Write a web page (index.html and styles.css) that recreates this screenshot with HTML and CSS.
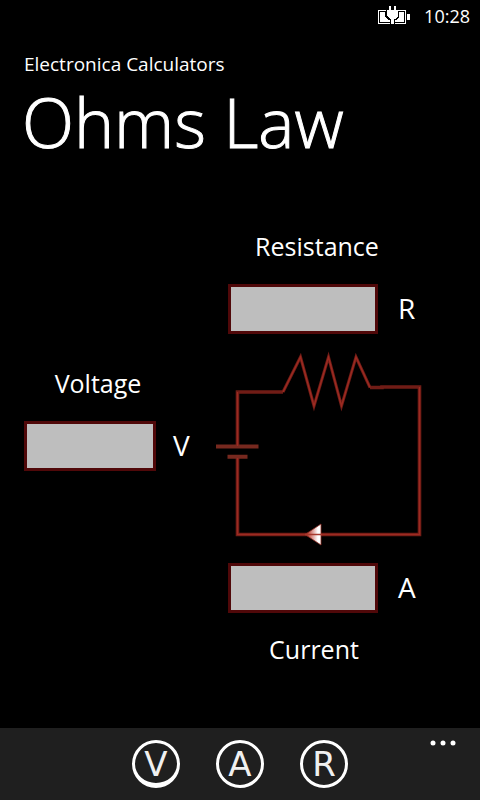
FILE: index.html
```html
<!DOCTYPE html>
<html lang="en">
<head>
<meta charset="utf-8">
<meta name="viewport" content="width=device-width, initial-scale=1">
<title>Ohms Law</title>
<link rel="stylesheet" href="styles.css">
</head>
<body>
<div class="status">
  <svg class="battery" width="32" height="20" viewBox="0 0 32 20" shape-rendering="crispEdges" aria-hidden="true">
    <path d="M0 5H8V6H1V18H12V19H0ZM20 5H28V19H17V18H27V6H20ZM29 9H32V15H29Z" fill="#fff"/>
    <path d="M2 7H7V12L10 15H12V17H2ZM21 7H26V17H17V15H18L21 12Z" fill="#fff"/>
    <path d="M11 1H13V5H16V1H18V5H20V11L17 14H16V19H13V14H12L9 11V5H11Z" fill="#fff"/>
  </svg>
  <time>10:28</time>
</div>
<header class="heading">
  <p class="app-name">Electronica Calculators</p>
  <h1 class="title">Ohms Law</h1>
</header>
<main class="calculator">
  <div class="group resistance">
    <label class="label" for="resistance">Resistance</label>
    <div class="entry"><input class="field" id="resistance" type="text"><span class="unit">R</span></div>
  </div>
  <div class="group voltage">
    <label class="label" for="voltage">Voltage</label>
    <div class="entry"><input class="field" id="voltage" type="text"><span class="unit">V</span></div>
  </div>
  <svg class="circuit" viewBox="216 350 212 200" role="img" aria-label="Circuit with a battery and a resistor">
    <defs>
      <linearGradient id="arrow" x1="0" x2="1"><stop offset=".15" stop-color="#b8382b"/><stop offset=".8" stop-color="#fff"/></linearGradient>
    </defs>
    <g fill="none" stroke="#701c16" stroke-width="3.6">
      <path d="M237.5 446V392H283"/>
      <path d="M370 387.5H382V387H419.5V534.5H237.5V458"/>
      <path d="M283 392L300.5 357L314 406L328.5 357L341.5 406L356 357L370 387.5" stroke-width="3"/>
      <path d="M216 446.5H258.5M227.5 456.7H247.5" stroke="#77291f" stroke-width="4"/>
    </g>
    <path d="M237.5 446V392M419.5 387V534.5H237.5V458M283 392L300.5 357L314 406L328.5 357L341.5 406L356 357L370 387.5" fill="none" stroke="#9c2b22" stroke-width="1.4"/>
    <path d="M305 534.5L321 524V545Z" fill="url(#arrow)" stroke="#8c2b22" stroke-width=".8"/>
    <path d="M305 534.5H322" stroke="#a7382d" stroke-width="1.5"/>
  </svg>
  <div class="group current">
    <div class="entry"><input class="field" id="current" type="text"><span class="unit">A</span></div>
    <label class="label" for="current">Current</label>
  </div>
</main>
<footer class="app-bar">
  <button class="round offset" type="button" aria-label="Calculate voltage">V</button>
  <button class="round" type="button" aria-label="Calculate current">A</button>
  <button class="round" type="button" aria-label="Calculate resistance">R</button>
  <button class="more" type="button" aria-label="More"><svg width="26" height="6" viewBox="0 0 26 6" fill="#fff"><circle cx="3" cy="3" r="2.5"/><circle cx="13" cy="3" r="2.5"/><circle cx="23" cy="3" r="2.5"/></svg></button>
</footer>
</body>
</html>
```
FILE: styles.css
```css
* {
  box-sizing: border-box;
}

body {
  margin: 0;
  min-height: 100vh;
  display: flex;
  flex-direction: column;
  background: #000;
  color: #fff;
  font-family: "Open Sans", "Noto Sans", sans-serif;
}

.status {
  display: flex;
  justify-content: flex-end;
  align-items: center;
  gap: 14px;
  height: 32px;
  padding-right: 10px;
  font-size: 18px;
  line-height: 30px;
}

.battery {
  margin-top: -2px;
}

.heading {
  padding: 18px 22px 0;
}

.app-name {
  margin: 0 2px;
  font-size: 19px;
  line-height: 28px;
}

.title {
  margin: 0;
  font-size: 68px;
  font-weight: 300;
  line-height: 88px;
  -webkit-text-stroke: 1px #fff;
}

.calculator {
  flex: 1;
  display: grid;
  grid-template-columns: 192px 212px;
  grid-template-rows: auto auto auto;
  align-content: start;
  padding: 61px 24px 0;
}

.group {
  display: flex;
  flex-direction: column;
  gap: 19px;
}

.resistance,
.current {
  grid-column: 2;
  padding-left: 12px;
}

.current {
  gap: 17px;
}

.voltage {
  grid-column: 1;
  padding-top: 30px;
}

.circuit {
  grid-column: 2;
  width: 100%;
  margin: 16px 0 13px;
}

.label {
  font-size: 25px;
  line-height: 38px;
  text-align: center;
}

.resistance .label {
  padding-right: 22px;
}

.current .label {
  padding-right: 28px;
}

.voltage .label {
  padding-right: 44px;
}

.entry {
  display: flex;
  align-items: flex-start;
  gap: 20px;
}

.voltage .entry {
  gap: 17px;
}

.field {
  width: 150px;
  height: 50px;
  padding: 8px;
  border: 3px solid #500809;
  border-radius: 0;
  background: #bebebe;
  color: #000;
  font: inherit;
  font-size: 24px;
}

.voltage .field {
  width: 132px;
}

.unit {
  font-size: 28px;
  line-height: 48px;
}

.app-bar {
  position: relative;
  display: flex;
  justify-content: center;
  align-items: center;
  gap: 36px;
  height: 72px;
  background: #1f1f1f;
}

.round {
  width: 48px;
  height: 48px;
  padding: 0;
  border: 3px solid #fff;
  border-radius: 50%;
  background: none;
  color: #f0f0f0;
  font: 34px/42px "DejaVu Sans", sans-serif;
}

.offset {
  border-bottom-width: 5px;
}

.more {
  position: absolute;
  top: 8px;
  right: 24px;
  display: flex;
  padding: 4px 0;
  border: 0;
  background: none;
}
```
